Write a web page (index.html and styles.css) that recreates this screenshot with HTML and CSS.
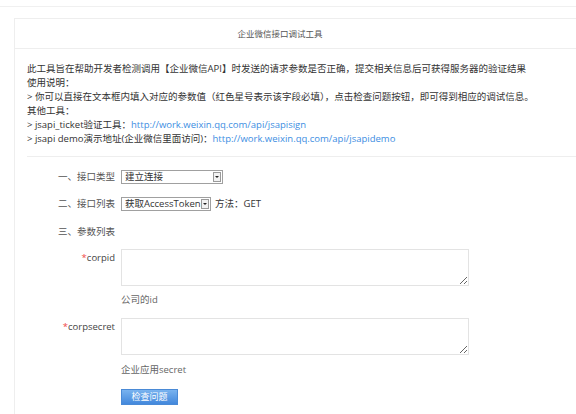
FILE: index.html
```html
<!DOCTYPE html>
<html lang="zh-CN">
<head>
<meta charset="utf-8">
<title>企业微信接口调试工具</title>
<link rel="stylesheet" href="styles.css">
</head>
<body>
<div class="topbar"></div>
<div class="card">
  <div class="card-head">企业微信接口调试工具</div>
  <div class="intro">
    <p>此工具旨在帮助开发者检测调用【企业微信API】时发送的请求参数是否正确，提交相关信息后可获得服务器的验证结果</p>
    <p>使用说明：</p>
    <p>&gt; 你可以直接在文本框内填入对应的参数值（红色星号表示该字段必填），点击检查问题按钮，即可得到相应的调试信息。</p>
    <p>其他工具：</p>
    <p>&gt; jsapi_ticket验证工具：<a href="#">http://work.weixin.qq.com/api/jsapisign</a></p>
    <p>&gt; jsapi demo演示地址(企业微信里面访问)：<a href="#">http://work.weixin.qq.com/api/jsapidemo</a></p>
  </div>
  <div class="form">
    <div class="row row-type">
      <span class="label">一、接口类型</span>
      <div class="control">
        <span class="select select-wide"><span class="select-text">建立连接</span><span class="select-btn"></span></span>
      </div>
    </div>
    <div class="row row-list">
      <span class="label">二、接口列表</span>
      <div class="control inline">
        <span class="select select-narrow"><span class="select-text">获取AccessToken</span><span class="select-btn"></span></span>
        <span class="method">方法：GET</span>
      </div>
    </div>
    <div class="row row-params">
      <span class="label">三、参数列表</span>
    </div>
    <div class="row row-field row-corpid">
      <span class="label field-label"><span class="req">*</span>corpid</span>
      <div class="control">
        <textarea class="field"></textarea>
        <div class="hint hint-first">公司的id</div>
      </div>
    </div>
    <div class="row row-field row-secret">
      <span class="label field-label"><span class="req">*</span>corpsecret</span>
      <div class="control">
        <textarea class="field"></textarea>
        <div class="hint hint-second">企业应用secret</div>
        <button class="btn" type="button">检查问题</button>
      </div>
    </div>
  </div>
</div>
</body>
</html>
```

FILE: styles.css
```css
html, body {
  margin: 0;
  padding: 0;
  background: #fff;
  overflow: hidden;
}
body {
  font-family: "Open Sans", "Noto Sans CJK SC", sans-serif;
  font-size: 9.5px;
  color: #333;
}
.topbar {
  height: 6px;
  border-bottom: 1px solid #f0f0f0;
}
.card {
  box-sizing: border-box;
  margin: 11px 0 0 14px;
  border-left: 1px solid #eeeeee;
  border-top: 1px solid #eeeeee;
  height: 396px;
  overflow: hidden;
}
.card-head {
  height: 29px;
  line-height: 29px;
  border-bottom: 1px solid #eeeeee;
  text-align: center;
  padding-right: 31px;
  font-size: 8.5px;
  color: #555;
}
.intro {
  margin-left: 12px;
  padding: 13px 0 11px;
  border-bottom: 1px solid #eeeeee;
}
.intro p {
  margin: 0;
  line-height: 13.9px;
  white-space: nowrap;
}
.intro a {
  color: #3d8ee2;
  text-decoration: none;
}
.form {
  padding-top: 12px;
}
.row {
  display: grid;
  grid-template-columns: 100px 1fr;
  column-gap: 6px;
  align-items: center;
}
.label {
  text-align: right;
  color: #555;
  line-height: 14px;
  white-space: nowrap;
}
.row-type { margin-top: 1px; }
.row-list { margin-top: 13px; }
.row-params { margin-top: 14px; }
.row-corpid { margin-top: 10px; }
.row-secret { margin-top: 11px; }
.row-field { align-items: start; }
.field-label {
  padding-top: 2px;
  color: #444;
}
.req {
  color: #f04848;
}
.control.inline {
  display: flex;
  align-items: center;
  gap: 4px;
}
.select {
  display: flex;
  align-items: center;
  box-sizing: border-box;
  height: 14px;
  border: 1px solid #a0a0a0;
  background: #fff;
  color: #333;
  padding: 0 1px 0 3px;
}
.select-wide { width: 102px; }
.select-narrow { width: 90px; }
.select-text {
  flex: 1;
  line-height: 12px;
  white-space: nowrap;
  overflow: hidden;
}
.select-btn {
  position: relative;
  box-sizing: border-box;
  width: 8px;
  height: 10px;
  border: 1px solid #9a9a9a;
  background: #f2f2f2;
}
.select-btn::after {
  content: "";
  position: absolute;
  left: 1px;
  top: 3px;
  border-left: 2px solid transparent;
  border-right: 2px solid transparent;
  border-top: 2px solid #222;
}
.method {
  color: #333;
  line-height: 14px;
}
.field {
  display: block;
  box-sizing: border-box;
  width: 348px;
  height: 37px;
  margin: 0;
  border: 1px solid #e3e3e3;
  background: #fff;
  font: inherit;
}
.hint {
  color: #666;
  line-height: 14px;
}
.hint-first { margin-top: 7px; }
.hint-second { margin-top: 8px; }
.btn {
  display: block;
  margin-top: 12px;
  box-sizing: border-box;
  width: 57px;
  height: 16px;
  padding: 0;
  border: 1px solid #4a8ad6;
  background: linear-gradient(#79b3ef, #4388dc);
  color: #fff;
  font: inherit;
  font-size: 9px;
  line-height: 14px;
}
```
